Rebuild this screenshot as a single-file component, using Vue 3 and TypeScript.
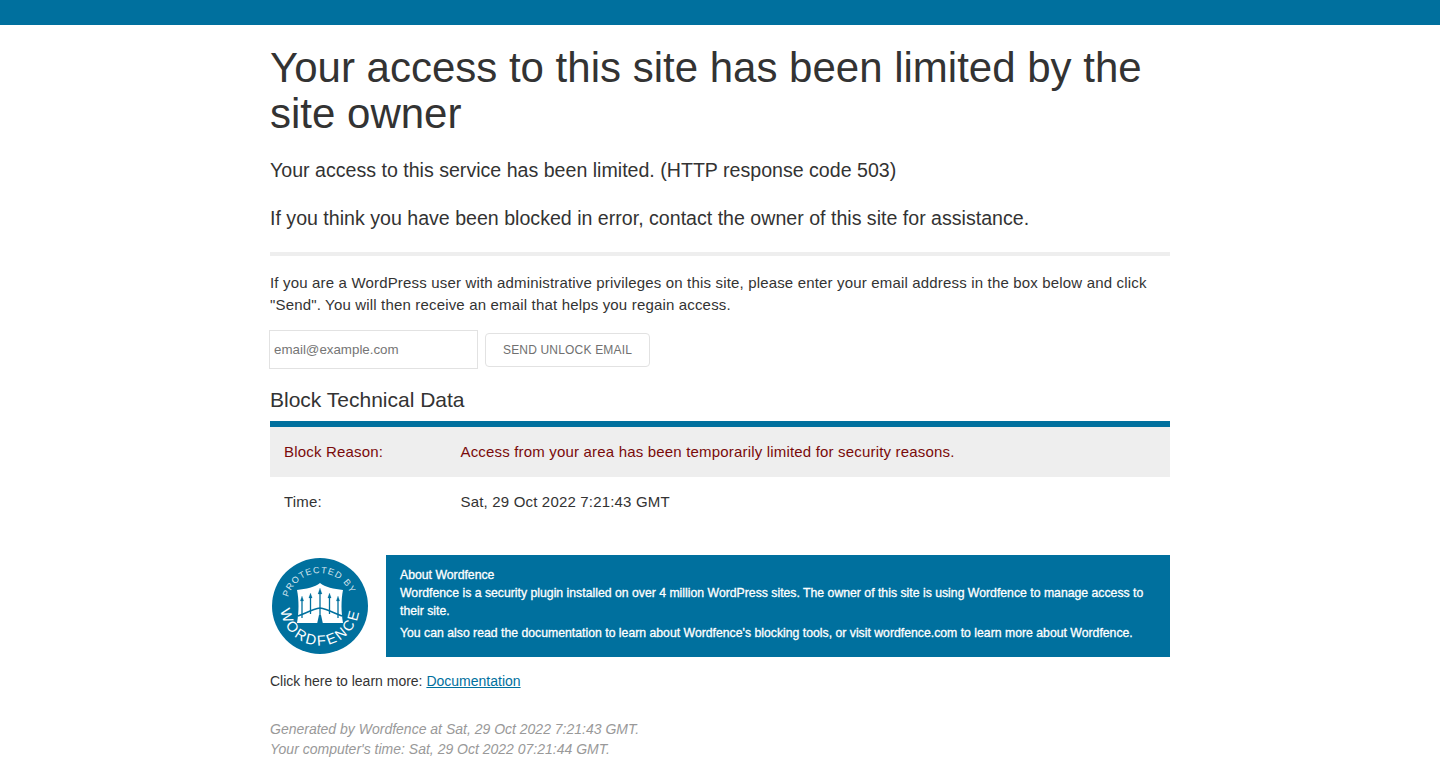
<script setup lang="ts">
const rows = [
  { label: 'Block Reason:', value: 'Access from your area has been temporarily limited for security reasons.', alt: true },
  { label: 'Time:', value: 'Sat, 29 Oct 2022 7:21:43 GMT', alt: false },
]
</script>

<template>
  <div class="topbar"></div>
  <main class="container">
    <h1>Your access to this site has been limited by the site owner</h1>
    <p class="lead first">Your access to this service has been limited. (HTTP response code 503)</p>
    <p class="lead second">If you think you have been blocked in error, contact the owner of this site for assistance.</p>
    <hr />
    <p class="body-text">If you are a WordPress user with administrative privileges on this site, please enter your email address in the box below and click "Send". You will then receive an email that helps you regain access.</p>
    <form class="unlock" @submit.prevent>
      <input type="email" placeholder="email@example.com" />
      <button type="submit">SEND UNLOCK EMAIL</button>
    </form>
    <h2>Block Technical Data</h2>
    <div class="table">
      <div v-for="r in rows" :key="r.label" class="row" :class="{ alt: r.alt }">
        <div class="label">{{ r.label }}</div>
        <div>{{ r.value }}</div>
      </div>
    </div>
    <div class="about">
      <div class="logo">
        <svg width="96" height="96" viewBox="0 0 96 96" aria-label="Protected by Wordfence">
          <circle cx="48" cy="48" r="48" fill="#00709e" />
          <defs>
            <path id="arcTop" d="M 16.500 58 A 33 33 0 1 1 79.500 58" />
            <path id="arcBottom" d="M 8.500 48 A 39.500 39.500 0 0 0 87.500 48" />
          </defs>
          <g transform="rotate(-3 48 48)">
            <text class="arc-small"><textPath href="#arcTop" startOffset="50%" text-anchor="middle">PROTECTED BY</textPath></text>
          </g>
          <text class="arc-big"><textPath href="#arcBottom" startOffset="50%" text-anchor="middle">WORDFENCE</textPath></text>
          <path d="M25 32 C34 31 43 29 48 25 C53 29 62 31 71 32 C69 42 69 54 71 65 L25 65 C27 54 27 42 25 32 Z" fill="#fff" />
          <g stroke="#00709e" fill="#00709e">
            <path d="M30 42 V60 M38.500 38 V56 M48 34 V66 M57.500 38 V56 M66 42 V60" fill="none" stroke-width="1.300" />
            <path d="M30 38 l-1.700 5 h3.400 Z M38.500 35 l-1.700 5 h3.400 Z M48 30 l-2 6 h4 Z M57.500 35 l-1.700 5 h3.400 Z M66 38 l-1.700 5 h3.400 Z" stroke-width="0.200" />
            <path d="M26 58 C34 55 41 51 48 50 C55 51 62 55 70 58" fill="none" stroke-width="1.600" />
            <path d="M45 66 L47 57 H49 L51 66 Z" stroke-width="0" />
          </g>
        </svg>
      </div>
      <div class="about-box">
        <div>About Wordfence</div>
        <p>Wordfence is a security plugin installed on over 4 million WordPress sites. The owner of this site is using Wordfence to manage access to their site.</p>
        <p>You can also read the documentation to learn about Wordfence's blocking tools, or visit wordfence.com to learn more about Wordfence.</p>
      </div>
    </div>
    <p class="learn">Click here to learn more: <a href="#">Documentation</a></p>
    <p class="generated">Generated by Wordfence at Sat, 29 Oct 2022 7:21:43 GMT.<br />Your computer's time: Sat, 29 Oct 2022 07:21:44 GMT.</p>
  </main>
</template>

<style>
html, body { margin: 0; background: #fff; }
</style>

<style scoped>
.topbar { height: 25px; background: #00709e; }
.container {
  width: 900px;
  margin: 0 auto;
  font-family: "Liberation Sans", Arial, sans-serif;
  color: #333;
  font-size: 14px;
}
h1 { margin: 0; padding-top: 20px; font-size: 42px; line-height: 46px; font-weight: 400; }
.lead { margin: 20px 0 0; font-size: 19.600px; line-height: 26px; }
.lead.second { margin-top: 22px; }
hr { height: 4px; margin: 21px 0 0; border: 0; background: #eee; }
.body-text { margin: 16px 0 0; font-size: 15px; line-height: 22px; letter-spacing: 0.170px; }
.unlock { display: flex; align-items: center; gap: 7px; margin: 14px 0 0 -1px; }
input {
  box-sizing: border-box; width: 209px; height: 39px; padding: 0 4px;
  border: 1px solid #e2e2e2; font: 13.330px "Liberation Sans", Arial, sans-serif; outline: none;
}
input::placeholder { color: #757575; opacity: 1; }
button {
  box-sizing: border-box; width: 165px; height: 34px; padding: 0;
  border: 1px solid #e2e2e2; border-radius: 4px; background: #fff; color: #707070;
  font: 12px "Liberation Sans", Arial, sans-serif; letter-spacing: 0.180px;
}
h2 { margin: 18px 0 0; font-size: 21px; line-height: 26px; font-weight: 400; }
.table { margin-top: 8px; border-top: 6px solid #00709e; }
.row { display: flex; height: 50px; align-items: center; box-sizing: border-box; padding: 0 0 2px 14px; font-size: 15px; letter-spacing: 0.180px; }
.row.alt { background: #eee; color: #7a0a0a; }
.label { width: 176.500px; }
.about { display: flex; gap: 14px; margin-top: 28px; align-items: center; }
.logo { width: 102px; display: flex; justify-content: center; transform: translateX(-1px); }
.about-box {
  flex: 1; box-sizing: border-box; height: 102px; padding: 11px 14px 0; background: #00709e; color: #fff;
  font-size: 12.250px; line-height: 18px; font-weight: 400; -webkit-text-stroke: 0.300px #fff;
}
.about-box p { margin: 0 0 4px; }
.learn { margin: 15px 0 0; font-size: 14px; line-height: 18px; }
.learn a { color: #00709e; }
.generated { margin: 29px 0 0; font-size: 14px; line-height: 20px; font-style: italic; color: #999; }
.arc-small { font: 9px "Liberation Sans", Arial, sans-serif; letter-spacing: 1px; fill: #d5e6ef; }
.arc-big { font: 14.500px "Liberation Sans", Arial, sans-serif; letter-spacing: 2.300px; fill: #fff; }
</style>
